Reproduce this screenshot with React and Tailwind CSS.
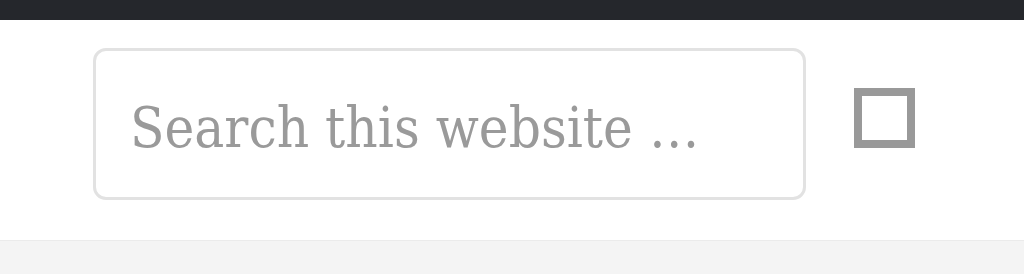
export default function App() {
  return (
    <div className="w-[1024px] h-[274px] flex flex-col bg-[#f4f4f4] overflow-hidden">
      <div className="h-[20px] bg-[#25272c] shrink-0" />
      <div className="h-[221px] bg-white border-b border-[#ebebeb] shrink-0 flex items-start pl-[93px] pt-[28px]">
        <div className="w-[713px] h-[152px] border-[3px] border-[#e2e2e2] rounded-[13px] flex items-center pl-[34px] pt-[7px]">
          <span
            className="text-[56px] font-light text-[#9a9a9a] leading-none whitespace-nowrap font-stretch-condensed"
            style={{ fontFamily: '"DejaVu Serif Condensed", "DejaVu Serif", serif' }}
          >
            Search this website …
          </span>
        </div>
        <div className="ml-[48px] mt-[40px] w-[61px] h-[60px] border-[8px] border-[#999999]" />
      </div>
    </div>
  );
}
